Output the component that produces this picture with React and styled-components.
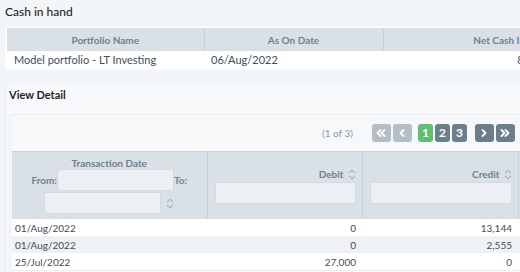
import React from "react";
import styled, { createGlobalStyle } from "styled-components";

const Global = createGlobalStyle`
  html, body {
    margin: 0;
    padding: 0;
    background: #f3f6f9;
    overflow: hidden;
    font-family: Lato, "Liberation Sans", sans-serif;
  }
`;

const Page = styled.div`
  width: 520px;
  height: 272px;
  overflow: hidden;
`;

const Heading = styled.h2`
  margin: 0;
  padding: ${(p) => p.$pad || "3px 0 0 5px"};
  font-size: ${(p) => p.$size || "12px"};
  font-weight: ${(p) => p.$weight || 500};
  line-height: ${(p) => p.$lh || "18px"};
  color: #1f2329;
  white-space: nowrap;
`;

const CashPanel = styled.div`
  margin: 4px 0 0 5px;
  padding: 2px;
  width: 640px;
  background: #fbfcfd;
  border-top: 1px solid #eef1f4;
`;

const Table = styled.table`
  border-collapse: collapse;
  table-layout: fixed;
  width: ${(p) => p.$width};
  font-size: ${(p) => p.$size || "11px"};
  color: #474c52;
`;

const Th = styled.th`
  background: #dae1e6;
  color: #6f808f;
  font-size: 10px;
  font-weight: 700;
  height: 23px;
  padding: 0 6px;
  text-align: ${(p) => p.$align || "center"};
  border-right: 1px solid #c9d2d9;
  white-space: nowrap;
  overflow: hidden;
`;

const Td = styled.td`
  height: 17px;
  padding: 0 ${(p) => p.$px || "7px"};
  text-align: ${(p) => p.$align || "left"};
  white-space: nowrap;
  overflow: hidden;
  background: ${(p) => (p.$odd ? "#eef1f5" : "#ffffff")};
`;

const DetailPanel = styled.div`
  margin-top: 15px;
  margin-left: 5px;
  padding: 3px 0 0 3px;
  border-left: 1px solid #e9eef2;
  background: #f7f9fb;
  height: 200px;
`;

const Grid = styled.div`
  margin-top: 12px;
  border: 1px solid #e8edf1;
  border-right: none;
  background: #f6f8fa;
  padding: 0 0 0 2px;
  width: 700px;
`;

const Pager = styled.div`
  display: flex;
  align-items: center;
  height: 36px;
  padding-left: 310px;
`;

const PageInfo = styled.span`
  font-size: 10px;
  color: #8c9aa6;
  margin-right: 19px;
`;

const PageBtn = styled.button`
  box-sizing: border-box;
  flex: none;
  width: ${(p) => (p.$num ? "15px" : "19px")};
  height: 18px;
  margin: 0 ${(p) => p.$gap || "2px"} 0 0;
  padding: 0;
  border: none;
  border-radius: 3px;
  background: ${(p) =>
    p.$active ? "#5cc06c" : p.$disabled ? "#b3bec6" : "#6d7e8b"};
  color: #ffffff;
  font-family: Lato, "Liberation Sans", sans-serif;
  font-size: 12px;
  font-weight: 700;
  line-height: 18px;
  display: flex;
  align-items: center;
  justify-content: center;
`;

const HeadCell = styled.th`
  background: #dae1e6;
  color: #6f808f;
  font-weight: 700;
  font-size: 10px;
  height: 62px;
  padding: ${(p) => p.$pad || "0 6px 0 7px"};
  vertical-align: ${(p) => p.$valign || "middle"};
  text-align: ${(p) => p.$align || "center"};
  border-right: 1px solid #c9d2d9;
  border-top: 1px solid #c9d2d9;
  line-height: 12px;
`;

const Label = styled.span`
  display: inline-flex;
  align-items: center;
  gap: 4px;
  line-height: 14px;
`;

const FilterInput = styled.input`
  box-sizing: border-box;
  display: block;
  width: ${(p) => p.$w || "100%"};
  height: 22px;
  margin: ${(p) => p.$m || "0"};
  border: 1px solid #d3dbe1;
  border-radius: 2px;
  background: #ecf0f4;
`;

const FilterLine = styled.div`
  display: flex;
  align-items: center;
  justify-content: center;
  gap: ${(p) => p.$gap || "0"};
  margin-top: ${(p) => p.$mt || "0"};
`;

const SortIcon = () => (
  <svg width="8" height="11" viewBox="0 0 8 11" fill="none">
    <path d="M1 4.2 L4 1.2 L7 4.2" stroke="#a2afb9" strokeWidth="1.1" />
    <path d="M1 6.8 L4 9.8 L7 6.8" stroke="#a2afb9" strokeWidth="1.1" />
  </svg>
);

const Chevron = ({ dir = "right", double }) => {
  const flip = dir === "left" ? "scale(-1,1) translate(-10,0)" : undefined;
  return (
    <svg width="10" height="10" viewBox="0 0 10 10" fill="none">
      <g transform={flip} stroke="#ffffff" strokeWidth="1.8" strokeLinecap="round" strokeLinejoin="round">
        {double ? (
          <>
            <path d="M1.5 2 L4.5 5 L1.5 8" />
            <path d="M5.5 2 L8.5 5 L5.5 8" />
          </>
        ) : (
          <path d="M3.5 2 L6.5 5 L3.5 8" />
        )}
      </g>
    </svg>
  );
};

const rows = [
  ["01/Aug/2022", "0", "13,144", "13,144"],
  ["01/Aug/2022", "0", "2,555", "15,699"],
  ["25/Jul/2022", "27,000", "0", "42,699"],
];

const App = () => {
  return (
    <Page>
      <Global />
      <Heading>Cash in hand</Heading>
      <CashPanel>
        <Table $width="566px">
          <colgroup>
            <col style={{ width: 197 }} />
            <col style={{ width: 179 }} />
            <col style={{ width: 190 }} />
          </colgroup>
          <thead>
            <tr>
              <Th>Portfolio Name</Th>
              <Th>As On Date</Th>
              <Th $align="right">Net Cash Investment</Th>
            </tr>
          </thead>
          <tbody>
            <tr>
              <Td>Model portfolio - LT Investing</Td>
              <Td>06/Aug/2022</Td>
              <Td $align="right" $px="6px">86,46,123</Td>
            </tr>
          </tbody>
        </Table>
      </CashPanel>
      <DetailPanel>
        <Heading $size="11px" $weight={700} $pad="0" $lh="14px">
          View Detail
        </Heading>
        <Grid>
          <Pager>
            <PageInfo>(1 of 3)</PageInfo>
            <PageBtn $disabled>
              <Chevron dir="left" double />
            </PageBtn>
            <PageBtn $disabled $gap="6px">
              <Chevron dir="left" />
            </PageBtn>
            <PageBtn $num $active>1</PageBtn>
            <PageBtn $num>2</PageBtn>
            <PageBtn $num $gap="8px">3</PageBtn>
            <PageBtn>
              <Chevron />
            </PageBtn>
            <PageBtn>
              <Chevron double />
            </PageBtn>
          </Pager>
          <Table $width="660px" $size="10px">
            <colgroup>
              <col style={{ width: 195 }} />
              <col style={{ width: 155 }} />
              <col style={{ width: 156 }} />
              <col style={{ width: 154 }} />
            </colgroup>
            <thead>
              <tr>
                <HeadCell $valign="top" $pad="5px 4px 0">
                  <div>Transaction Date</div>
                  <FilterLine>
                    From:
                    <FilterInput $w="117px" />
                    To:
                  </FilterLine>
                  <FilterLine $gap="5px" $mt="1px">
                    <FilterInput $w="117px" />
                    <SortIcon />
                  </FilterLine>
                </HeadCell>
                <HeadCell $align="right">
                  <Label>
                    Debit <SortIcon />
                  </Label>
                  <FilterInput $m="1px 0 0" />
                </HeadCell>
                <HeadCell $align="right">
                  <Label>
                    Credit <SortIcon />
                  </Label>
                  <FilterInput $m="1px 0 0" />
                </HeadCell>
                <HeadCell $align="right">
                  <Label>
                    Balance <SortIcon />
                  </Label>
                  <FilterInput $m="1px 0 0" />
                </HeadCell>
              </tr>
            </thead>
            <tbody>
              {rows.map((r, i) => (
                <tr key={i}>
                  <Td $odd={i % 2 === 1} $px="3px">{r[0]}</Td>
                  <Td $odd={i % 2 === 1} $align="right" $px="6px">{r[1]}</Td>
                  <Td $odd={i % 2 === 1} $align="right" $px="6px">{r[2]}</Td>
                  <Td $odd={i % 2 === 1} $align="right" $px="6px">{r[3]}</Td>
                </tr>
              ))}
            </tbody>
          </Table>
        </Grid>
      </DetailPanel>
    </Page>
  );
};

export default App;
